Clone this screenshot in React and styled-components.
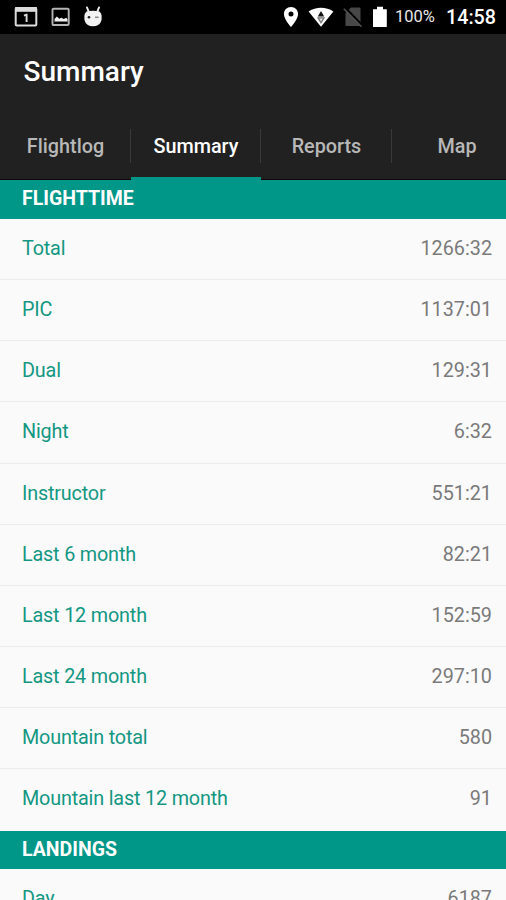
import styled, { createGlobalStyle } from "styled-components";

const flighttime = [
  { label: "Total", value: "1266:32" },
  { label: "PIC", value: "1137:01" },
  { label: "Dual", value: "129:31" },
  { label: "Night", value: "6:32" },
  { label: "Instructor", value: "551:21" },
  { label: "Last 6 month", value: "82:21" },
  { label: "Last 12 month", value: "152:59" },
  { label: "Last 24 month", value: "297:10" },
  { label: "Mountain total", value: "580" },
  { label: "Mountain last 12 month", value: "91" },
];

const landings = [{ label: "Day", value: "6187" }];

const tabs = ["Flightlog", "Summary", "Reports", "Map"];

function CalendarIcon() {
  return (
    <svg width="24" height="22" viewBox="0 0 24 22">
      <rect x="1.7" y="2" width="20.6" height="17.6" rx="1" fill="none" stroke="#dcdcdc" strokeWidth="2" />
      <path d="M1 1.2h22v4.6H1z" fill="#dcdcdc" />
      <path d="M10 9.6l2.4-1h.2v7.5" fill="none" stroke="#dcdcdc" strokeWidth="1.9" />
    </svg>
  );
}

function PictureIcon() {
  return (
    <svg width="20" height="20" viewBox="0 0 20 20">
      <rect x="1.5" y="1.7" width="16.2" height="16.3" rx="1" fill="none" stroke="#b4b4b4" strokeWidth="1.9" />
      <path d="M3.500 14.500V12l2.400-2.600 2.300 2.400 2.200-1 2.300 1.300 2.600-1.400 1.200 1.800v2z" fill="#f2f2f2" />
    </svg>
  );
}

function RobotIcon() {
  return (
    <svg width="20" height="22" viewBox="0 0 20 22">
      <path d="M4 1.500l2 5M16 1.500l-2 5" stroke="#eee" strokeWidth="2" strokeLinecap="round" />
      <path
        d="M3.500 5.500c4-.9 9-.9 13 0l1.500 2 .6 2v4l-.6 2c-1 3-3.900 4.700-8 4.700s-7-1.700-8-4.700l-.6-2v-4l.6-2z"
        fill="#f2f2f2"
      />
      <circle cx="6" cy="11.300" r="1.300" fill="#222" />
      <path d="M12 11.300h3.600" stroke="#888" strokeWidth="1.500" />
    </svg>
  );
}

function LocationIcon() {
  return (
    <svg width="16" height="22" viewBox="0 0 16 22">
      <path
        d="M8 1C4 1 .9 4 .9 7.900.9 13 8 21 8 21s7.100-8 7.100-13.100C15.100 4 12 1 8 1zm0 4.500a2.500 2.500 0 110 5 2.500 2.500 0 010-5z"
        fill="#fff"
        fillRule="evenodd"
      />
    </svg>
  );
}

function WifiIcon() {
  return (
    <svg width="26" height="20" viewBox="0 0 26 20">
      <path d="M.6 4.500C8-.5 18-.5 25.400 4.500L13 19.800z" fill="#fff" />
      <path d="M13 4l3.200 5.500H9.800z" fill="#111" />
      <path d="M10 10.800h6l-3 5z" fill="#ddd" stroke="#777" strokeWidth="1.300" />
    </svg>
  );
}

function NoSimIcon() {
  return (
    <svg width="20" height="22" viewBox="0 0 20 22">
      <path d="M8 1.500h8.500q1 0 1 1V20h-15V7z" fill="#484848" />
      <path d="M2.500 2l17 17.500" stroke="#000" strokeWidth="2.200" />
      <path d="M.8 2.700l17.700 18" stroke="#505050" strokeWidth="1.600" />
    </svg>
  );
}

function BatteryIcon() {
  return (
    <svg width="16" height="22" viewBox="0 0 16 22">
      <path d="M5 .8h6v2.400h3.800V21H1V3.200h4z" fill="#fff" />
    </svg>
  );
}

function Section({ title, rows }) {
  return (
    <section>
      <SectionHeader>{title}</SectionHeader>
      {rows.map((row) => (
        <Row key={row.label}>
          <Label>{row.label}</Label>
          <Value>{row.value}</Value>
        </Row>
      ))}
    </section>
  );
}

function App() {
  return (
    <>
      <GlobalStyle />
      <Screen>
        <StatusBar>
          <Notifications>
            <CalendarIcon />
            <PictureIcon />
            <RobotIcon />
          </Notifications>
          <SystemIcons>
            <LocationIcon />
            <WifiIcon />
            <NoSimIcon />
            <BatteryIcon />
          </SystemIcons>
          <Percent>100%</Percent>
          <Clock>14:58</Clock>
        </StatusBar>
        <TitleBar>Summary</TitleBar>
        <TabBar>
          {tabs.map((tab) => (
            <Tab key={tab} $active={tab === "Summary"}>
              {tab}
            </Tab>
          ))}
        </TabBar>
        <Section title="FLIGHTTIME" rows={flighttime} />
        <Section title="LANDINGS" rows={landings} />
      </Screen>
    </>
  );
}

const GlobalStyle = createGlobalStyle`
  * {
    box-sizing: border-box;
  }
  body {
    margin: 0;
    background: #fafafa;
    font-family: Roboto, sans-serif;
  }
`;

const Screen = styled.main`
  width: 506px;
  height: 900px;
  overflow: hidden;
  background: #fafafa;
`;

const StatusBar = styled.header`
  display: flex;
  align-items: center;
  height: 34px;
  padding: 0 11px 0 14px;
  background: #000;
  color: #fff;
  svg {
    display: block;
  }
`;

const Notifications = styled.div`
  display: flex;
  align-items: center;
  gap: 12.5px;
`;

const SystemIcons = styled.div`
  display: flex;
  align-items: center;
  gap: 9px;
  margin-left: auto;
`;

const Percent = styled.span`
  width: 40px;
  margin-left: 7px;
  padding-bottom: 2px;
  color: #e8e8e8;
  font-size: 16.5px;
  white-space: nowrap;
`;

const Clock = styled.span`
  width: 49px;
  margin-left: 11px;
  font-size: 19.7px;
  font-weight: 500;
  white-space: nowrap;
`;

const TitleBar = styled.h1`
  height: 77px;
  margin: 0;
  padding-left: 23.5px;
  background: #212121;
  color: #fff;
  font-size: 28px;
  font-weight: 500;
  line-height: 76px;
`;

const TabBar = styled.nav`
  display: flex;
  height: 69px;
  overflow: hidden;
  background: #212121;
`;

const Tab = styled.div`
  flex: 0 0 130.5px;
  height: 69px;
  padding-left: 0.5px;
  color: ${({ $active }) => ($active ? "#fff" : "#b8b8b8")};
  font-size: 19.8px;
  font-weight: 500;
  line-height: 71px;
  text-align: center;
  border-bottom: ${({ $active }) => ($active ? "3px solid #009688" : "1px solid #10060a")};
  background: linear-gradient(#393939, #393939) right 18px / 1px 34px no-repeat;
`;

const SectionHeader = styled.h2`
  height: 38.8px;
  margin: 0;
  padding-left: 22px;
  background: #009688;
  color: #fff;
  font-size: 19.5px;
  font-weight: 700;
  line-height: 37px;
`;

const Row = styled.div`
  display: flex;
  justify-content: space-between;
  height: 61.2px;
  padding: 0 14px 0 22px;
  border-bottom: 1px solid #ececec;
  font-size: 19.8px;
  line-height: 60px;
  &:last-child {
    border-bottom: none;
  }
`;

const Label = styled.span`
  color: #149782;
  letter-spacing: -0.17px;
`;

const Value = styled.span`
  color: #7a7a7a;
`;

export default App;
